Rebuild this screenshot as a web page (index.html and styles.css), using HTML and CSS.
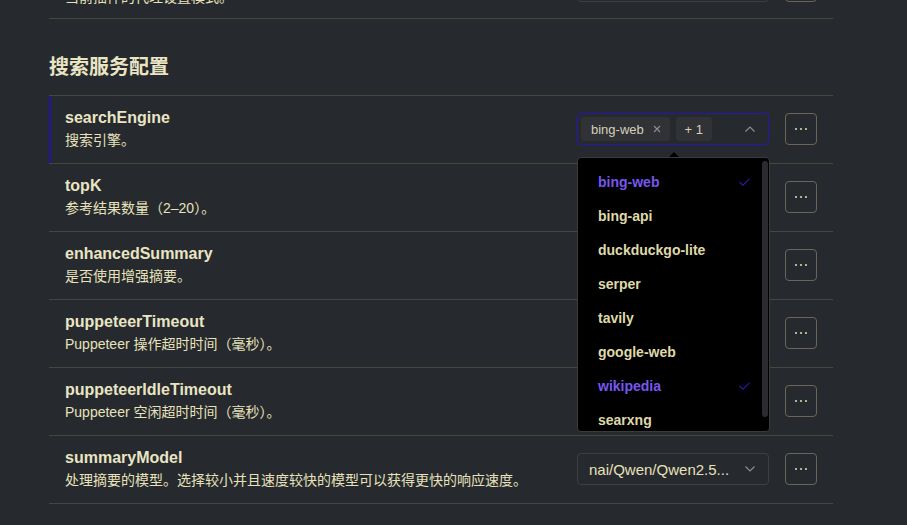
FILE: index.html
```html
<!DOCTYPE html>
<html lang="zh-CN">
<head>
<meta charset="utf-8">
<title>搜索服务配置</title>
<link rel="stylesheet" href="styles.css">
</head>
<body>
<div class="page">
  <div class="row row-prev">
    <div class="info">
      <div class="title">proxyMode</div>
      <div class="desc">当前插件的代理设置模式。</div>
    </div>
    <div class="control">
      <div class="select"></div>
      <button class="more"><svg width="14" height="4" viewBox="0 0 14 4"><circle cx="2" cy="2" r="1.1"/><circle cx="7" cy="2" r="1.1"/><circle cx="12" cy="2" r="1.1"/></svg></button>
    </div>
  </div>

  <h2 class="section-title">搜索服务配置</h2>

  <div class="list">
    <div class="row row-active">
      <div class="info">
        <div class="title">searchEngine</div>
        <div class="desc">搜索引擎。</div>
      </div>
      <div class="control">
        <div class="select-wrap">
          <div class="select select-focus">
            <div class="tags">
              <span class="tag">bing-web<svg class="tag-x" width="8" height="8" viewBox="0 0 8 8"><path d="M1 1L7 7M7 1L1 7"/></svg></span>
              <span class="tag tag-more">+ 1</span>
            </div>
            <svg class="chev" width="10" height="6" viewBox="0 0 10 6"><path d="M0.5 5.5L5 1L9.5 5.5"/></svg>
          </div>
          <div class="dropdown">
            <span class="dropdown-arrow"></span>
            <ul class="options">
              <li class="option selected">bing-web<svg class="check" width="11" height="8" viewBox="0 0 11 8"><path d="M0.5 4L4 7.2L10.5 0.6"/></svg></li>
              <li class="option">bing-api</li>
              <li class="option">duckduckgo-lite</li>
              <li class="option">serper</li>
              <li class="option">tavily</li>
              <li class="option">google-web</li>
              <li class="option selected">wikipedia<svg class="check" width="11" height="8" viewBox="0 0 11 8"><path d="M0.5 4L4 7.2L10.5 0.6"/></svg></li>
              <li class="option">searxng</li>
              <li class="option">baidu-web</li>
            </ul>
            <span class="scroll-thumb"></span>
          </div>
        </div>
        <button class="more"><svg width="14" height="4" viewBox="0 0 14 4"><circle cx="2" cy="2" r="1.1"/><circle cx="7" cy="2" r="1.1"/><circle cx="12" cy="2" r="1.1"/></svg></button>
      </div>
    </div>

    <div class="row">
      <div class="info">
        <div class="title">topK</div>
        <div class="desc">参考结果数量（2–20）。</div>
      </div>
      <div class="control">
        <div class="select"><span class="select-text">5</span></div>
        <button class="more"><svg width="14" height="4" viewBox="0 0 14 4"><circle cx="2" cy="2" r="1.1"/><circle cx="7" cy="2" r="1.1"/><circle cx="12" cy="2" r="1.1"/></svg></button>
      </div>
    </div>

    <div class="row">
      <div class="info">
        <div class="title">enhancedSummary</div>
        <div class="desc">是否使用增强摘要。</div>
      </div>
      <div class="control">
        <div class="select"><span class="select-text">false</span></div>
        <button class="more"><svg width="14" height="4" viewBox="0 0 14 4"><circle cx="2" cy="2" r="1.1"/><circle cx="7" cy="2" r="1.1"/><circle cx="12" cy="2" r="1.1"/></svg></button>
      </div>
    </div>

    <div class="row">
      <div class="info">
        <div class="title">puppeteerTimeout</div>
        <div class="desc">Puppeteer 操作超时时间（毫秒）。</div>
      </div>
      <div class="control">
        <div class="select"><span class="select-text">60000</span></div>
        <button class="more"><svg width="14" height="4" viewBox="0 0 14 4"><circle cx="2" cy="2" r="1.1"/><circle cx="7" cy="2" r="1.1"/><circle cx="12" cy="2" r="1.1"/></svg></button>
      </div>
    </div>

    <div class="row">
      <div class="info">
        <div class="title">puppeteerIdleTimeout</div>
        <div class="desc">Puppeteer 空闲超时时间（毫秒）。</div>
      </div>
      <div class="control">
        <div class="select"><span class="select-text">300000</span></div>
        <button class="more"><svg width="14" height="4" viewBox="0 0 14 4"><circle cx="2" cy="2" r="1.1"/><circle cx="7" cy="2" r="1.1"/><circle cx="12" cy="2" r="1.1"/></svg></button>
      </div>
    </div>

    <div class="row">
      <div class="info">
        <div class="title">summaryModel</div>
        <div class="desc">处理摘要的模型。选择较小并且速度较快的模型可以获得更快的响应速度。</div>
      </div>
      <div class="control">
        <div class="select">
          <span class="select-text model">nai/Qwen/Qwen2.5...</span>
          <svg class="chev" width="10" height="6" viewBox="0 0 10 6"><path d="M0.5 0.5L5 5L9.5 0.5"/></svg>
        </div>
        <button class="more"><svg width="14" height="4" viewBox="0 0 14 4"><circle cx="2" cy="2" r="1.1"/><circle cx="7" cy="2" r="1.1"/><circle cx="12" cy="2" r="1.1"/></svg></button>
      </div>
    </div>
  </div>
</div>
</body>
</html>
```

FILE: styles.css
```css
* { box-sizing: border-box; }

html, body {
  margin: 0;
  padding: 0;
  background: #26292d;
  overflow: hidden;
}

body {
  font-family: "Liberation Sans", Arial, "Noto Sans CJK SC", sans-serif;
  color: #e6e2bf;
}

.page {
  margin: -47px 74px 0 49px;
}

.row {
  display: flex;
  align-items: center;
  justify-content: space-between;
  height: 68px;
  padding: 11px 16px 12px;
  border-bottom: 1px solid #48453f;
}

.row-prev {
  padding-bottom: 10px;
  height: 66px;
}

.row-active {
  box-shadow: inset 2px 0 0 #2212a6;
}

.info {
  display: flex;
  flex-direction: column;
}

.title {
  font-size: 16px;
  font-weight: bold;
  line-height: 22px;
  color: #e9e5c4;
}

.desc {
  font-size: 14px;
  line-height: 22px;
  color: #e6e2bc;
}

.control {
  display: flex;
  align-items: center;
  gap: 16px;
}

.select-wrap {
  position: relative;
}

.select {
  width: 192px;
  height: 32px;
  border: 1px solid #3d3f43;
  border-radius: 4px;
  display: flex;
  align-items: center;
  justify-content: space-between;
  padding: 0 13px 0 11px;
}

.select-focus {
  border-color: #2616b2;
  padding-left: 3px;
}

.select-text {
  font-size: 14px;
  color: #e6e2bc;
  white-space: nowrap;
}

.select-text.model {
  font-size: 15px;
}

.tags {
  display: flex;
  gap: 6px;
}

.tag {
  display: flex;
  align-items: center;
  height: 24px;
  padding: 0 9px 0 10px;
  border-radius: 3px;
  background: #303236;
  font-size: 13px;
  color: #d4d0bc;
  white-space: nowrap;
}

.tag-x {
  margin-left: 9px;
  stroke: #909090;
  stroke-width: 1.1;
  fill: none;
}

.tag-more {
  padding: 0;
  width: 36px;
  justify-content: center;
}

.chev {
  stroke: #8d8d8d;
  stroke-width: 1.2;
  fill: none;
}

.more {
  width: 32px;
  height: 32px;
  padding: 0;
  border: 1px solid #6c645a;
  border-radius: 4px;
  background: transparent;
  display: flex;
  align-items: center;
  justify-content: center;
}

.more svg {
  fill: #d6d2ae;
}

.dropdown {
  position: absolute;
  top: 44px;
  left: 0;
  width: 193px;
  height: 275px;
  background: #000;
  border: 1px solid #3b3b3d;
  border-radius: 4px;
  z-index: 10;
}

.dropdown-arrow {
  position: absolute;
  top: -6px;
  left: 91px;
  width: 0;
  height: 0;
  border-left: 5px solid transparent;
  border-right: 5px solid transparent;
  border-bottom: 5px solid #000;
}

.options {
  list-style: none;
  margin: 0;
  padding: 7px 0 0;
  height: 273px;
  overflow: hidden;
}

.option {
  height: 34px;
  display: flex;
  align-items: center;
  justify-content: space-between;
  padding: 0 19px 0 20px;
  font-size: 14px;
  font-weight: bold;
  color: #dfd9a9;
}

.option.selected {
  color: #7756ef;
}

.check {
  stroke: #2a19ad;
  stroke-width: 1.2;
  fill: none;
}

.scroll-thumb {
  position: absolute;
  right: 1px;
  top: 3px;
  width: 6px;
  height: 256px;
  border-radius: 3px;
  background: #2b2c2f;
}

.section-title {
  margin: 0;
  padding: 33px 0 15px;
  font-size: 20px;
  line-height: 28px;
  font-weight: bold;
  color: #e9e5c4;
  font-family: "Noto Sans CJK SC", sans-serif;
}

.list {
  border-top: 1px solid #48453f;
}
```
